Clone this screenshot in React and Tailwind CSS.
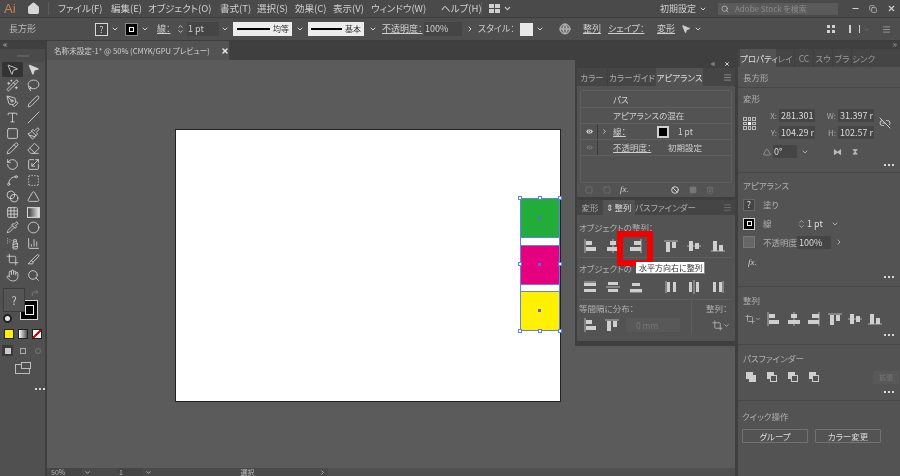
import React from "react";
import {
  MousePointer2, Wand2, Lasso, PenTool, Pen, Type, Slash, Square, Paintbrush, Eraser, RotateCcw, Scaling,
  Spline, Blend, Triangle, Grid3x3, Pipette, SprayCan, ChartColumn, Crop, Slice, Hand, Search, ChevronDown,
  ChevronRight, ChevronUp, ChevronsLeft, ChevronsRight, Eye, Home, Minus, X, Copy, Link2Off, Menu, Globe, Trash2, Ban, Pencil, BoxSelect, Circle, CornerUpRight,
} from "lucide-react";

const menus = [
  ["ファイル(F)", "w-[53px]"],
  ["編集(E)", "w-[37px]"],
  ["オブジェクト(O)", "w-[72px]"],
  ["書式(T)", "w-[37px]"],
  ["選択(S)", "w-[38px]"],
  ["効果(C)", "w-[38px]"],
  ["表示(V)", "w-[38px]"],
  ["ウィンドウ(W)", "w-[70px]"],
  ["ヘルプ(H)", "w-[40px]"],
];

function GradientTool({ size }) {
  return (
    <svg width={size} height={size} viewBox="0 0 12 12">
      <defs>
        <linearGradient id="toolgrad">
          <stop offset="0" stopColor="#333" />
          <stop offset="1" stopColor="#eee" />
        </linearGradient>
      </defs>
      <rect x="0.5" y="1.5" width="11" height="9" fill="url(#toolgrad)" stroke="#d6d6d6" />
    </svg>
  );
}

const tools = [
  [MousePointer2, MousePointer2],
  [Wand2, Lasso],
  [PenTool, Pen],
  [Type, Slash],
  [Square, Paintbrush],
  [Pencil, Eraser],
  [RotateCcw, Scaling],
  [Spline, BoxSelect],
  [Blend, Triangle],
  [Grid3x3, GradientTool],
  [Pipette, Circle],
  [SprayCan, ChartColumn],
  [Crop, Slice],
  [Hand, Search],
];

// small align glyphs: line = guide line, blocks = the two objects
function AlignIcon({ line, blocks, className = "" }) {
  return (
    <svg viewBox="0 0 16 16" className={`w-[16px] h-[16px] shrink-0 ${className}`}>
      {line && <line x1={line[0]} y1={line[1]} x2={line[2]} y2={line[3]} stroke="#b4b4b4" strokeWidth="1" />}
      {blocks.map((b, i) => (
        <rect key={i} x={b[0]} y={b[1]} width={b[2]} height={b[3]} fill="#cfcfcf" />
      ))}
    </svg>
  );
}

const alignLeft = { line: [3, 1, 3, 15], blocks: [[4, 3, 6, 4], [4, 9, 10, 4]] };
const alignCenterH = { line: [8, 1, 8, 15], blocks: [[5, 3, 6, 4], [2, 9, 12, 4]] };
const alignRight = { line: [13, 1, 13, 15], blocks: [[6, 3, 7, 4], [2, 9, 11, 4]] };
const alignTop = { line: [1, 3, 15, 3], blocks: [[3, 4, 4, 10], [9, 4, 4, 6]] };
const alignCenterV = { line: [1, 8, 15, 8], blocks: [[3, 3, 4, 10], [9, 5, 4, 6]] };
const alignBottom = { line: [1, 13, 15, 13], blocks: [[3, 3, 4, 10], [9, 7, 4, 6]] };
const distTop = { line: [2, 3, 14, 3], blocks: [[2, 4, 12, 3], [2, 10, 12, 3]] };
const distMid = { line: [1, 8, 15, 8], blocks: [[3, 3, 10, 3], [3, 10, 10, 3]] };
const distBottom = { line: [2, 13, 14, 13], blocks: [[4, 4, 8, 3], [2, 10, 12, 3]] };
const distLeft = { line: [3, 2, 3, 14], blocks: [[4, 3, 3, 10], [10, 3, 3, 10]] };
const distCenter = { line: [8, 1, 8, 15], blocks: [[3, 3, 3, 10], [10, 3, 3, 10]] };
const distRight = { line: [13, 2, 13, 14], blocks: [[3, 3, 3, 10], [9, 3, 3, 10]] };

function Dots({ className = "" }) {
  return <div className={`flex justify-end gap-[2px] ${className}`}>
    <span className="w-[2px] h-[2px] bg-[#d8d8d8]" />
    <span className="w-[2px] h-[2px] bg-[#d8d8d8]" />
    <span className="w-[2px] h-[2px] bg-[#d8d8d8]" />
  </div>;
}

function Field({ label, value }) {
  return (
    <div className="flex items-center">
      <span className="w-[15px] text-[8px] text-[#a8a8a8] text-right mr-[2px]">{label}:</span>
      <span className="w-[36px] h-[13px] leading-[13px] bg-[#454545] pl-[2px] text-[9px] text-[#dcdcdc] overflow-hidden whitespace-nowrap">{value}</span>
    </div>
  );
}

function Handle({ className }) {
  return <span className={`absolute w-[4px] h-[4px] bg-white border border-[#5b83e8] ${className}`} />;
}

export default function App() {
  return (
    <div className="relative w-[900px] h-[476px] overflow-hidden flex flex-col bg-[#535353] text-[#cfcfcf] blur-[0.35px] [font-feature-settings:'palt'] font-['Noto_Sans_CJK_JP','Liberation_Sans',sans-serif]">
      {/* menu bar */}
      <div className="h-[18px] flex items-center bg-[#4a4a4a] border-b border-[#3d3d3d] text-[9.5px] [&>*]:shrink-0">
        <span className="w-[24px] pl-[4px] text-[#c9824f] text-[13px] font-['Liberation_Sans',sans-serif]">Ai</span>
        <Home size={13} fill="#d8d8d8" className="ml-[3px] text-[#d8d8d8]" />
        <div className="w-px h-[13px] bg-[#5d5d5d] ml-[8px] mr-[9px]" />
        {menus.map(([m, w]) => (
          <span key={m} className={`${w} whitespace-nowrap`}>{m}</span>
        ))}
        <div className="w-px h-[13px] bg-[#5d5d5d] mr-[7px]" />
        <div className="grid grid-cols-2 gap-px w-[11px]">
          <span className="h-[4px] bg-[#d0d0d0]" /><span className="h-[4px] bg-[#d0d0d0]" />
          <span className="h-[4px] bg-[#d0d0d0]" /><span className="h-[4px] bg-[#d0d0d0]" />
        </div>
        <ChevronDown size={9} strokeWidth={3} className="ml-[3px]" />
        <span className="ml-[148px] w-[36px] whitespace-nowrap text-[9px]">初期設定</span>
        <ChevronDown size={8} strokeWidth={3} className="ml-[3px]" />
        <div className="ml-[11px] w-[120px] h-[12px] bg-[#5a5a5a] flex items-center pl-[3px] text-[8px] text-[#8b8b8b] whitespace-nowrap">
          <Search size={8} className="text-[#cfcfcf] mr-[6px]" />Adobe Stock を検索
        </div>
        <div className="ml-[8px] flex items-center text-[#cfcfcf]">
          <span className="w-[18px] flex justify-center"><Minus size={9} strokeWidth={3} /></span>
          <span className="w-[18px] flex justify-center"><Copy size={8} strokeWidth={2} /></span>
          <span className="w-[18px] flex justify-center"><X size={9} strokeWidth={3} /></span>
        </div>
      </div>

      {/* control bar */}
      <div className="h-[23px] flex items-center bg-[#4e4e4e] border-b border-[#3d3d3d] text-[9px] [&>*]:shrink-0">
        <span className="ml-[9px] w-[86px] text-[#bcbcbc]">長方形</span>
        <span className="w-[13px] h-[13px] border border-[#d8d8d8] bg-[#444] text-[9px] leading-[11px] text-center">?</span>
        <ChevronDown size={8} strokeWidth={3} className="ml-[3px]" />
        <span className="ml-[6px] w-[13px] h-[13px] bg-black border border-[#888] flex items-center justify-center"><span className="w-[5px] h-[5px] border border-white" /></span>
        <ChevronDown size={8} strokeWidth={3} className="ml-[3px]" />
        <span className="ml-[8px] w-[19px] whitespace-nowrap underline">線：</span>
        <span className="flex flex-col w-[9px] items-center"><ChevronUp size={7} strokeWidth={3} className="-mb-[2px]" /><ChevronDown size={7} strokeWidth={3} /></span>
        <span className="ml-[2px] w-[32px] h-[14px] leading-[14px] bg-[#454545] pl-[1px] text-[9px]">1 pt</span>
        <ChevronDown size={8} strokeWidth={3} className="ml-[2px] mr-[3px]" />
        <div className="ml-[1px] w-[59px] h-[14px] bg-[#ededed] flex items-center pl-[4px] text-[8px] text-[#333] whitespace-nowrap">
          <span className="w-[33px] h-[1.5px] bg-black mr-[3px]" />均等
        </div>
        <span className="w-[16px] flex justify-center"><ChevronDown size={8} strokeWidth={3} /></span>
        <div className="w-[56px] h-[14px] bg-[#ededed] flex items-center pl-[3px] text-[8px] text-[#333] whitespace-nowrap">
          <span className="w-[31px] h-[1.5px] bg-black mr-[3px]" />基本
        </div>
        <span className="w-[18px] flex justify-center"><ChevronDown size={8} strokeWidth={3} /></span>
        <span className="w-[42px] whitespace-nowrap underline">不透明度：</span>
        <span className="w-[38px] h-[14px] leading-[14px] bg-[#454545] pl-[1px]">100%</span>
        <span className="w-[16px] flex justify-center"><ChevronRight size={8} strokeWidth={3} /></span>
        <span className="w-[42px] whitespace-nowrap">スタイル：</span>
        <span className="w-[13px] h-[13px] bg-[#e8e8e8]" />
        <ChevronDown size={8} strokeWidth={3} className="ml-[3px]" />
        <Globe size={12} className="ml-[15px] text-[#bcbcbc]" fill="#777" />
        <span className="ml-[12px] w-[25px] underline">整列</span>
        <span className="w-[49px] whitespace-nowrap underline">シェイプ：</span>
        <span className="w-[24px] underline whitespace-nowrap">変形</span>
        <MousePointer2 size={10} fill="#cfcfcf" />
        <ChevronDown size={8} strokeWidth={3} className="ml-[3px]" />
        <div className="ml-[125px] grid grid-cols-2 gap-[2px] w-[8px]">
          <span className="h-[3px] bg-[#d0d0d0]" /><span className="h-[3px] bg-[#d0d0d0]" />
          <span className="h-[3px] bg-[#d0d0d0]" /><span className="h-[3px] bg-[#d0d0d0]" />
        </div>
        <span className="ml-[14px] w-[11px] h-[8px] border-l-2 border-r border-[#cfcfcf]" />
        <ChevronDown size={7} className="ml-[3px] text-[#777]" />
        <Menu size={9} className="ml-[12px] text-[#a8a8a8]" />
      </div>

      <div className="flex-1 flex min-h-0">
        {/* tools */}
        <div className="w-[47px] shrink-0 bg-[#505050] border-r-[2px] border-[#3f3f3f]">
          <div className="h-[8px] bg-[#3f3f3f] flex items-center pl-[2px]"><ChevronsLeft size={6} strokeWidth={3} /></div>
          <div className="h-[13px] flex items-center justify-center bg-[#4a4a4a]"><span className="w-[12px] h-[2px] bg-[#5e5e5e]" /></div>
          <div className="flex flex-col items-center">
            {tools.map(([A, B], i) => (
              <div key={i} className="flex h-[15.8px] items-center">
                <span className={`w-[21px] h-[15px] flex items-center justify-center ${i === 0 ? "bg-[#333] rounded-[1px]" : ""}`}>
                  <A size={13} strokeWidth={1.6} className="text-[#d6d6d6]" />
                </span>
                <span className="w-[21px] h-[15px] flex items-center justify-center">
                  <B size={13} strokeWidth={1.6} fill={i === 0 ? "#d6d6d6" : "none"} className="text-[#d6d6d6]" />
                </span>
              </div>
            ))}
          </div>
          {/* fill / stroke */}
          <div className="relative h-[41px] mt-[5px]">
            <span className="absolute left-[20px] top-[12px] w-[18px] h-[20px] bg-black border border-[#d8d8d8] flex items-center justify-center"><span className="w-[9px] h-[10px] border border-white" /></span>
            <span className="absolute left-[3px] top-0 w-[22px] h-[24px] bg-[#555] border border-[#3d3d3d] text-[11px] leading-[22px] text-center">?</span>
            <CornerUpRight size={8} className="absolute left-[31px] top-[1px] text-[#8a8a8a]" />
            <span className="absolute left-[3px] top-[26px] w-[9px] h-[9px] rounded-full bg-[#e8e8e8] border-2 border-[#222]" />
          </div>
          <div className="flex justify-center gap-[4px]">
            <span className="w-[10px] h-[10px] bg-[#fff200] border border-[#222]" />
            <span className="w-[10px] h-[10px] bg-gradient-to-r from-white to-[#555] border border-[#222]" />
            <span className="w-[10px] h-[10px] border border-[#222] bg-[linear-gradient(135deg,#fff_40%,#e00_40%,#e00_60%,#fff_60%)]" />
          </div>
          <div className="flex justify-center gap-[4px] mt-[6px]">
            <span className="w-[11px] h-[11px] bg-[#3a3a3a] flex items-center justify-center"><span className="w-[6px] h-[6px] bg-[#c9c9c9]" /></span>
            <span className="w-[11px] h-[11px] flex items-center justify-center"><span className="w-[6px] h-[6px] border border-[#aaa]" /></span>
            <span className="w-[11px] h-[11px] flex items-center justify-center"><span className="w-[6px] h-[6px] rounded-full border border-[#777]" /></span>
          </div>
          <div className="flex justify-center mt-[8px]">
            <span className="relative w-[15px] h-[10px] border border-[#bcbcbc]"><span className="absolute -top-[3px] left-[5px] w-[10px] h-[7px] border border-[#bcbcbc] bg-[#505050]" /></span>
          </div>
          <Dots className="justify-center mt-[14px]" />
        </div>

        {/* document area */}
        <div className="flex-1 flex flex-col min-w-0">
          <div className="h-[19px] flex bg-[#3f3f3f]">
            <div className="w-[182px] bg-[#535353] flex items-center pl-[7px] text-[7.6px] whitespace-nowrap">
              <span className="w-[167px]">名称未設定-1* @ 50% (CMYK/GPU プレビュー)</span>
              <X size={8} strokeWidth={4} className="text-[#e8e8e8]" />
            </div>
          </div>
          <div className="relative flex-1 bg-[#5b5b5b]">
            {/* artboard */}
            <div className="absolute left-[128px] top-[69px] w-[386px] h-[273px] bg-white border border-[#222]" />
            <div className="absolute left-[473px] top-[138px] w-[40px] h-[133px]">
              <div className="absolute inset-0 border border-[#5b83e8]" />
              <div className="absolute left-0 top-0 w-[40px] h-[40px] bg-[#22ac38] border border-[#5b83e8]" />
              <div className="absolute left-0 top-[47px] w-[40px] h-[40px] bg-[#e4007f] border border-[#5b83e8]" />
              <div className="absolute left-0 top-[93px] w-[40px] h-[40px] bg-[#fff100] border border-[#5b83e8]" />
              <span className="absolute left-[18px] top-[18px] w-[3px] h-[3px] bg-[#4a72e0]" />
              <span className="absolute left-[18px] top-[65px] w-[3px] h-[3px] bg-[#4a72e0]" />
              <span className="absolute left-[18px] top-[111px] w-[3px] h-[3px] bg-[#4a72e0]" />
              <Handle className="-left-[2px] -top-[2px]" />
              <Handle className="left-[18px] -top-[2px]" />
              <Handle className="left-[38px] -top-[2px]" />
              <Handle className="-left-[2px] top-[64px]" />
              <Handle className="left-[38px] top-[64px]" />
              <Handle className="-left-[2px] top-[131px]" />
              <Handle className="left-[18px] top-[131px]" />
              <Handle className="left-[38px] top-[131px]" />
            </div>

            {/* appearance panel */}
            <div className="absolute left-[528px] top-0 w-[160px] h-[137px] bg-[#535353] border-l-[2px] border-[#3f3f3f] flex flex-col">
              <div className="h-[8px] bg-[#3f3f3f] flex justify-end items-center gap-[8px] pr-[5px]">
                <ChevronsLeft size={6} strokeWidth={3} /><X size={6} strokeWidth={4} />
              </div>
              <div className="h-[18px] flex bg-[#454545] text-[8.5px]">
                <span className="w-[30px] text-center leading-[18px] text-[#aaa]">カラー</span>
                <span className="w-[49px] text-center leading-[18px] text-[#aaa] border-l border-[#3f3f3f] whitespace-nowrap">カラーガイド</span>
                <span className="w-[47px] text-center leading-[18px] bg-[#535353] text-[#dcdcdc] whitespace-nowrap">アピアランス</span>
                <span className="flex-1 flex justify-end items-center pr-[3px]"><Menu size={9} className="text-[#999]" /></span>
              </div>
              <div className="mx-[3px] mt-[4px] h-[93px] border border-[#5e5e5e] rounded-[2px] text-[8.5px]">
                <div className="h-[17px] flex items-center pl-[32px] border-b border-[#5e5e5e]">パス</div>
                <div className="h-[16px] flex items-center pl-[32px] border-b border-[#5e5e5e] whitespace-nowrap">アピアランスの混在</div>
                <div className="h-[16px] flex items-center border-b border-[#5e5e5e]">
                  <Eye size={9} fill="#cfcfcf" className="ml-[4px] text-[#4e4e4e]" />
                  <span className="ml-[3px] w-px h-[15px] bg-[#3a3a3a]" />
                  <ChevronRight size={7} strokeWidth={3} className="ml-[3px]" />
                  <span className="ml-[5px] w-[44px] underline">線：</span>
                  <span className="w-[12px] h-[12px] bg-black border-2 border-[#cfcfcf] mr-[9px]" />
                  <span>1 pt</span>
                </div>
                <div className="h-[16px] flex items-center border-b border-[#5e5e5e]">
                  <Eye size={9} fill="#777" className="ml-[4px] text-[#4e4e4e]" />
                  <span className="ml-[3px] w-px h-[15px] bg-[#3a3a3a]" />
                  <span className="ml-[15px] w-[55px] underline whitespace-nowrap">不透明度：</span>
                  <span className="whitespace-nowrap">初期設定</span>
                </div>
              </div>
              <div className="flex items-center h-[14px] pl-[8px] text-[#777]">
                <Square size={8} /><Square size={8} className="ml-[10px]" />
                <span className="ml-[9px] text-[9px] italic text-[#cfcfcf] font-['Liberation_Serif',serif]">fx.</span>
                <Ban size={8} strokeWidth={3} className="ml-[42px] text-[#cfcfcf]" />
                <Square size={8} fill="#777" className="ml-[10px]" />
                <Trash2 size={8} className="ml-[9px]" />
              </div>
            </div>

            {/* align panel */}
            <div className="absolute left-[528px] top-[137px] w-[160px] h-[149px] bg-[#535353] border-l-[2px] border-b-[2px] border-[#3f3f3f] flex flex-col">
              <div className="h-[3px] bg-[#3f3f3f]" />
              <div className="h-[15px] flex bg-[#454545] text-[8.5px]">
                <span className="w-[26px] text-center leading-[15px] text-[#aaa]">変形</span>
                <span className="w-[32px] text-center leading-[15px] bg-[#535353] text-[#dcdcdc]">⇕整列</span>
                <span className="w-[56px] text-center leading-[15px] text-[#aaa] whitespace-nowrap">パスファインダー</span>
                <span className="flex-1 flex justify-end items-center pr-[3px]"><Menu size={9} className="text-[#777]" /></span>
              </div>
              <div className="pl-[2px] pr-[3px] text-[8.5px] text-[#b0b0b0]">
                <div className="mt-[6px] h-[12px] leading-[12px] whitespace-nowrap">オブジェクトの整列：</div>
                <div className="flex items-center h-[24px] mt-[1px] border-b border-[#5e5e5e] pl-[3px]">
                  <AlignIcon {...alignLeft} />
                  <AlignIcon {...alignCenterH} className="ml-[7px]" />
                  <AlignIcon {...alignRight} className="ml-[7px]" />
                  <AlignIcon {...alignTop} className="ml-[19px]" />
                  <AlignIcon {...alignCenterV} className="ml-[7px]" />
                  <AlignIcon {...alignBottom} className="ml-[8px]" />
                </div>
                <div className="mt-[4px] h-[12px] leading-[12px] whitespace-nowrap">オブジェクトの</div>
                <div className="flex items-center h-[25px] mt-[1px] border-b border-[#5e5e5e] pl-[3px]">
                  <AlignIcon {...distTop} />
                  <AlignIcon {...distMid} className="ml-[7px]" />
                  <AlignIcon {...distBottom} className="ml-[7px]" />
                  <AlignIcon {...distLeft} className="ml-[19px]" />
                  <AlignIcon {...distCenter} className="ml-[7px]" />
                  <AlignIcon {...distRight} className="ml-[8px]" />
                </div>
                <div className="flex mt-[1px]">
                  <div className="w-[112px]">
                    <div className="h-[14px] leading-[14px] whitespace-nowrap">等間隔に分布：</div>
                    <div className="flex items-center h-[20px] pl-[3px]">
                      <AlignIcon {...alignLeft} />
                      <AlignIcon {...alignTop} className="ml-[6px]" />
                      <span className="ml-[6px] w-[54px] h-[14px] leading-[14px] bg-[#585858] pl-[10px] text-[#777]">0 mm</span>
                    </div>
                  </div>
                  <div className="flex-1 border-l border-[#5e5e5e] pl-[14px]">
                    <div className="h-[14px] leading-[14px] whitespace-nowrap">整列：</div>
                    <div className="flex items-center h-[20px] pl-[6px]"><Crop size={11} /><ChevronDown size={7} strokeWidth={3} /></div>
                  </div>
                </div>
              </div>
              <div className="mt-auto h-[3px] bg-[#3f3f3f]" />
            </div>

            {/* highlighted button + tooltip */}
            <div className="absolute left-[570px] top-[171px] w-[36px] h-[35px] border-[6px] border-[#f00000]" />
            <div className="absolute left-[589px] top-[202px] w-[69px] h-[12px] bg-white text-[#333] text-[8px] leading-[12px] pl-[3px] whitespace-nowrap border-r border-b border-[#888]">水平方向右に整列</div>
          </div>

          {/* status bar */}
          <div className="h-[8px] flex items-center bg-[#4a4a4a] text-[7px] text-[#bcbcbc] overflow-hidden">
            <span className="ml-[3px] w-[32px] h-[8px] leading-[8px] bg-[#454545] pl-[1px]">50%</span>
            <ChevronDown size={7} strokeWidth={3} className="ml-[2px]" />
            <span className="ml-[26px] w-[26px] h-[8px] leading-[8px] bg-[#454545] pl-[2px]">1</span>
            <ChevronDown size={7} strokeWidth={3} className="ml-[2px]" />
            <span className="ml-[30px] w-[131px] text-center">選択</span>
            <ChevronRight size={7} strokeWidth={3} className="ml-[6px]" />
            <span className="ml-[2px] flex-1 h-[8px] bg-[#505050]" />
          </div>
        </div>

        {/* properties dock */}
        <div className="w-[165px] shrink-0 bg-[#535353] border-l-[3px] border-[#3f3f3f] flex flex-col text-[8.5px] text-[#b0b0b0]">
          <div className="h-[8px] bg-[#3f3f3f] flex justify-end items-center pr-[2px]"><ChevronsRight size={6} strokeWidth={3} /></div>
          <div className="h-[18px] flex bg-[#454545] text-[8.5px] [&>*]:shrink-0">
            <span className="ml-[2px] w-[36px] text-center leading-[18px] bg-[#535353] text-[#dcdcdc] whitespace-nowrap">プロパティ</span>
            {["レイ", "CC", "スウ", "ブラ", "シンク"].map((t) => (
              <span key={t} className="w-[19px] text-center leading-[18px] text-[#9a9a9a] whitespace-nowrap border-r border-[#3f3f3f]">{t}</span>
            ))}
          </div>
          <div className="h-[21px] flex items-center pl-[5px] border-b border-[#484848]">長方形</div>

          <div className="h-[85px] border-b border-[#484848] pl-[5px] relative">
            <div className="h-[21px] flex items-center">変形</div>
            <div className="flex">
              <div className="grid grid-cols-3 gap-[1px] w-[13px] h-[13px] mt-[8px]">
                {[0, 1, 2, 3, 4, 5, 6, 7, 8].map((i) => (
                  <span key={i} className={i === 4 ? "bg-white" : "border border-[#bcbcbc]"} />
                ))}
              </div>
              <div className="ml-[6px] grid grid-cols-2 gap-x-[6px] gap-y-[4px]">
                <Field label="X" value="281.301" />
                <Field label="W" value="31.397 r" />
                <Field label="Y" value="104.29 r" />
                <Field label="H" value="102.57 r" />
              </div>
              <Link2Off size={12} className="ml-[5px] mt-[8px] text-[#cfcfcf]" />
            </div>
            <div className="flex items-center mt-[6px]">
              <Triangle size={8} className="ml-[20px]" />
              <span className="ml-[2px] w-[24px] h-[13px] leading-[13px] bg-[#454545] pl-[1px] text-[9px] text-[#dcdcdc]">0°</span>
              <ChevronDown size={8} strokeWidth={3} className="ml-[4px]" />
              <span className="ml-[24px] w-[9px] text-[9px] text-[#bcbcbc]">⧓</span>
              <span className="ml-[10px] w-[9px] text-[9px] text-[#bcbcbc]">⧗</span>
            </div>
            <Dots className="absolute right-[6px] bottom-[6px]" />
          </div>

          <div className="h-[114px] border-b border-[#484848] pl-[5px] relative">
            <div className="h-[22px] flex items-center pt-[2px]">アピアランス</div>
            <div className="h-[19px] flex items-center">
              <span className="w-[12px] h-[12px] bg-[#444] border border-[#666] text-[9px] leading-[10px] text-center text-[#e0e0e0]">?</span>
              <span className="ml-[8px]">塗り</span>
            </div>
            <div className="h-[19px] flex items-center">
              <span className="w-[12px] h-[12px] bg-black border border-[#cfcfcf] flex items-center justify-center"><span className="w-[5px] h-[5px] border border-white" /></span>
              <span className="ml-[8px] w-[34px]">線</span>
              <span className="flex flex-col w-[9px] items-center"><ChevronUp size={7} strokeWidth={3} className="-mb-[2px]" /><ChevronDown size={7} strokeWidth={3} /></span>
              <span className="ml-[1px] w-[20px] text-[9px] text-[#dcdcdc]">1 pt</span>
              <ChevronDown size={8} strokeWidth={3} className="ml-[4px]" />
            </div>
            <div className="h-[18px] flex items-center">
              <span className="w-[12px] h-[12px] border border-[#777] bg-[#666]" />
              <span className="ml-[8px] w-[34px] whitespace-nowrap">不透明度</span>
              <span className="w-[34px] h-[13px] leading-[13px] bg-[#454545] pl-[2px] text-[9px] text-[#dcdcdc]">100%</span>
              <ChevronRight size={8} strokeWidth={3} className="ml-[4px]" />
            </div>
            <div className="h-[18px] text-[9px] italic text-[#cfcfcf] pl-[5px] pt-[5px] font-['Liberation_Serif',serif]">fx.</div>
            <Dots className="absolute right-[6px] bottom-[8px]" />
          </div>

          <div className="h-[58px] border-b border-[#484848] pl-[5px] relative">
            <div className="h-[24px] flex items-center pt-[2px]">整列</div>
            <div className="flex items-center h-[16px]">
              <Crop size={10} className="ml-[2px]" />
              <ChevronDown size={6} strokeWidth={3} />
              <AlignIcon {...alignLeft} className="ml-[4px]" />
              <AlignIcon {...alignCenterH} className="ml-[5px]" />
              <AlignIcon {...alignRight} className="ml-[4px]" />
              <AlignIcon {...alignTop} className="ml-[5px]" />
              <AlignIcon {...alignCenterV} className="ml-[4px]" />
              <AlignIcon {...alignBottom} className="ml-[4px]" />
            </div>
            <Dots className="absolute right-[6px] bottom-[8px]" />
          </div>

          <div className="h-[56px] border-b border-[#484848] pl-[5px] relative">
            <div className="h-[24px] flex items-center pt-[2px] whitespace-nowrap">パスファインダー</div>
            <div className="flex items-center h-[16px] pl-[3px] gap-[10px]">
              {[0, 1, 2, 3].map((i) => (
                <span key={i} className="relative w-[11px] h-[11px]">
                  <span className="absolute left-0 top-0 w-[7px] h-[7px] bg-[#cfcfcf]" />
                  <span className={`absolute left-[3px] top-[3px] w-[7px] h-[7px] border border-[#cfcfcf] ${i === 0 ? "bg-[#cfcfcf]" : "bg-[#535353]"}`} />
                </span>
              ))}
              <span className="ml-[43px] w-[26px] h-[13px] leading-[13px] text-center bg-[#585858] text-[7px] text-[#777]">拡張</span>
            </div>
            <Dots className="absolute right-[6px] bottom-[7px]" />
          </div>

          <div className="flex-1 pl-[4px]">
            <div className="h-[28px] flex items-center pt-[2px]">クイック操作</div>
            <div className="flex gap-[7px]">
              <span className="w-[66px] h-[14px] leading-[12px] border border-[#727272] rounded-[1px] text-center text-[#dcdcdc]">グループ</span>
              <span className="w-[66px] h-[14px] leading-[12px] border border-[#727272] rounded-[1px] text-center text-[#dcdcdc] whitespace-nowrap">カラー変更</span>
            </div>
          </div>
        </div>
      </div>
    </div>
  );
}
